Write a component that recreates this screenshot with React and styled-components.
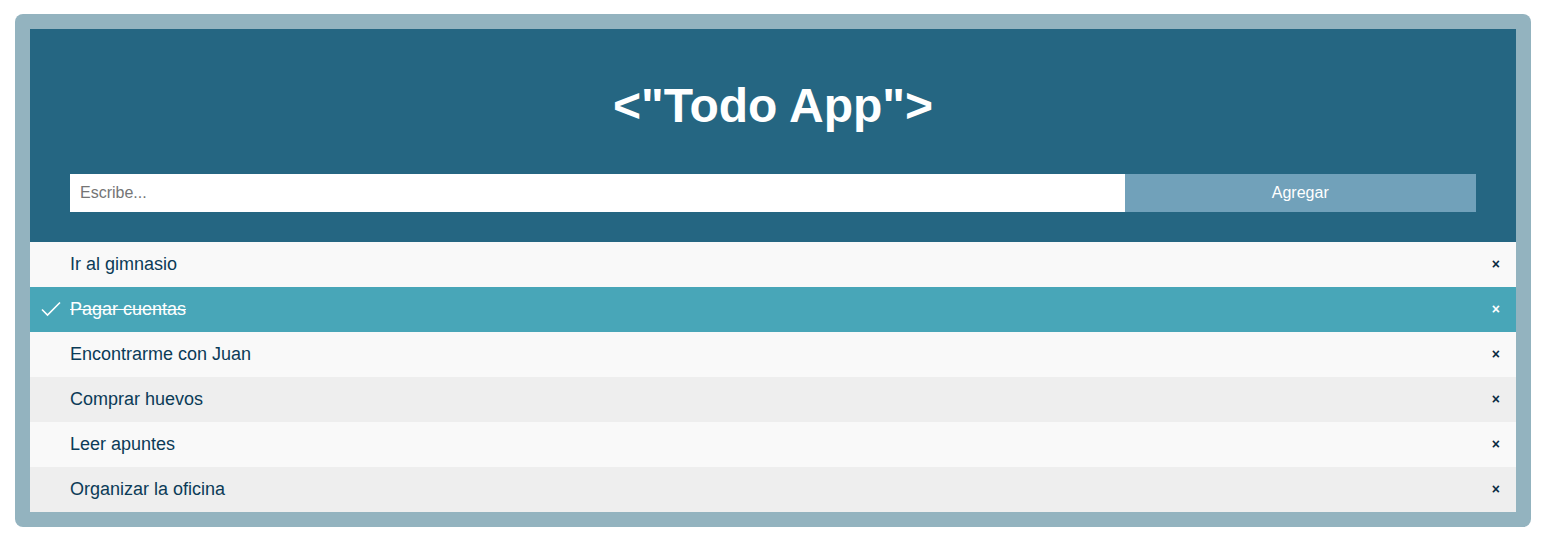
import React, { useState } from "react";
import styled, { createGlobalStyle, css } from "styled-components";

const Global = createGlobalStyle`
  html, body { margin: 0; padding: 0; background: #ffffff; }
  body { padding: 14px 16px 0 15px; font-family: "Liberation Sans", Arial, sans-serif; }
  * { box-sizing: border-box; }
`;

const Frame = styled.div`
  background: #93b3bf;
  border-radius: 8px;
  padding: 15px;
  width: 1516px;
`;

const Header = styled.header`
  background: #256682;
  padding: 49px 40px 30px;
  display: flex;
  flex-direction: column;
  align-items: stretch;
`;

const Title = styled.h1`
  margin: 0 0 41px;
  text-align: center;
  color: #ffffff;
  font-size: 48px;
  line-height: 55px;
  font-weight: 700;
`;

const Form = styled.form`
  display: flex;
  height: 38px;
`;

const Input = styled.input`
  flex: 0 0 75%;
  border: none;
  outline: none;
  padding: 0 10px;
  font-size: 16px;
  font-family: "Liberation Sans", Arial, sans-serif;
  color: #333;
  background: #ffffff;
  &::placeholder { color: #757575; }
`;

const AddButton = styled.button`
  flex: 1;
  border: none;
  background: #71a1ba;
  color: #ffffff;
  font-size: 16px;
  font-family: "Liberation Sans", Arial, sans-serif;
  cursor: pointer;
`;

const List = styled.ul`
  list-style: none;
  margin: 0;
  padding: 0;
`;

const Item = styled.li`
  position: relative;
  display: flex;
  align-items: center;
  height: 45px;
  padding: 0 40px;
  font-size: 18px;
  color: #0b3b57;
  background: ${(p) => (p.$odd ? "#f9f9f9" : "#eeeeee")};
  cursor: pointer;
  ${(p) =>
    p.$checked &&
    css`
      background: #48a6b8;
      color: #ffffff;
      text-decoration: line-through;
    `}
`;

const Check = styled.svg`
  position: absolute;
  left: 11px;
  top: 14px;
`;

const Close = styled.span`
  position: absolute;
  right: 16px;
  top: -1px;
  height: 45px;
  display: flex;
  align-items: center;
  font-size: 14px;
  font-weight: 700;
  color: ${(p) => (p.$checked ? "#ffffff" : "#0b2a44")};
`;

const todos = [
  { text: "Ir al gimnasio", done: false },
  { text: "Pagar cuentas", done: true },
  { text: "Encontrarme con Juan", done: false },
  { text: "Comprar huevos", done: false },
  { text: "Leer apuntes", done: false },
  { text: "Organizar la oficina", done: false },
];

export default function App() {
  const [items] = useState(todos);
  return (
    <>
      <Global />
      <Frame>
        <Header>
          <Title>{'<"Todo App">'}</Title>
          <Form onSubmit={(e) => e.preventDefault()}>
            <Input placeholder="Escribe..." />
            <AddButton type="submit">Agregar</AddButton>
          </Form>
        </Header>
        <List>
          {items.map((t, i) => (
            <Item key={t.text} $odd={i % 2 === 0} $checked={t.done}>
              {t.done && (
                <Check width="20" height="16" viewBox="0 0 20 16">
                  <path d="M1 8.5 L6.5 14 L19 1.5" fill="none" stroke="#ffffff" strokeWidth="1.6" />
                </Check>
              )}
              {t.text}
              <Close $checked={t.done}>×</Close>
            </Item>
          ))}
        </List>
      </Frame>
    </>
  );
}
